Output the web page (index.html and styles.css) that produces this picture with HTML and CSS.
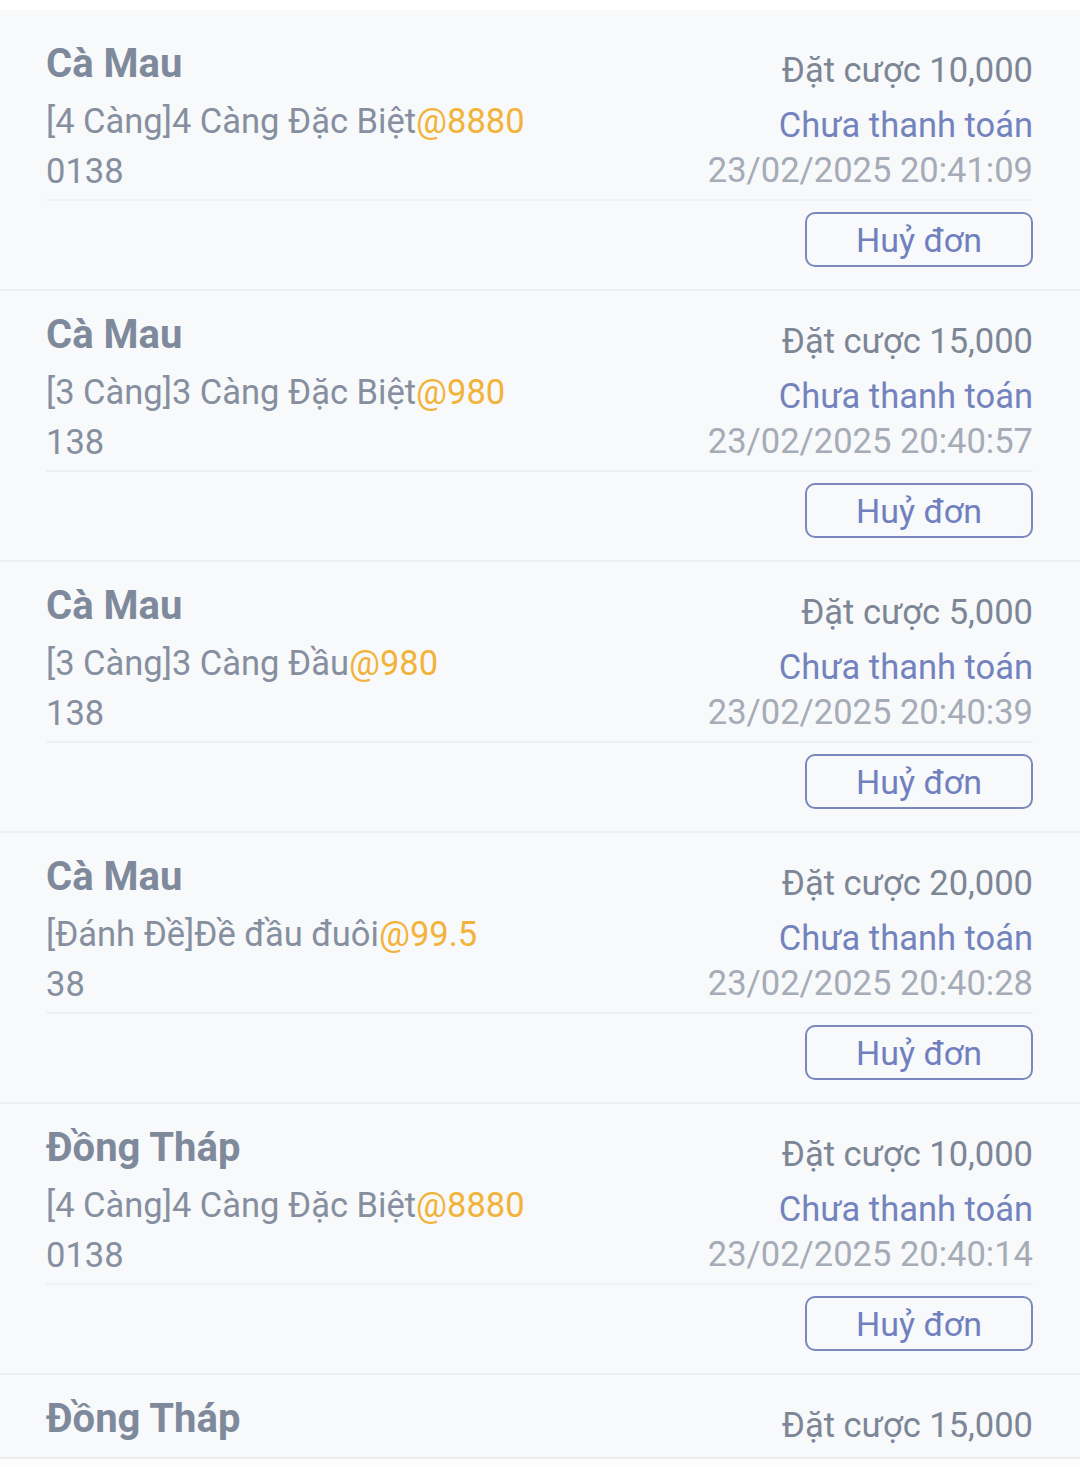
FILE: index.html
```html
<!DOCTYPE html>
<html lang="vi">
<head>
<meta charset="utf-8">
<title>Đơn cược</title>
<link rel="stylesheet" href="styles.css">
</head>
<body>
<div class="list">
  <div class="card">
    <div class="top">
      <div class="left">
        <div class="title">Cà Mau</div>
        <div class="detail">[4 Càng]4 Càng Đặc Biệt<span class="odds">@8880</span></div>
        <div class="number">0138</div>
      </div>
      <div class="right">
        <div class="bet">Đặt cược 10,000</div>
        <div class="status">Chưa thanh toán</div>
        <div class="date">23/02/2025 20:41:09</div>
      </div>
    </div>
    <div class="actions"><button class="cancel">Huỷ đơn</button></div>
  </div>
  <div class="card">
    <div class="top">
      <div class="left">
        <div class="title">Cà Mau</div>
        <div class="detail">[3 Càng]3 Càng Đặc Biệt<span class="odds">@980</span></div>
        <div class="number">138</div>
      </div>
      <div class="right">
        <div class="bet">Đặt cược 15,000</div>
        <div class="status">Chưa thanh toán</div>
        <div class="date">23/02/2025 20:40:57</div>
      </div>
    </div>
    <div class="actions"><button class="cancel">Huỷ đơn</button></div>
  </div>
  <div class="card">
    <div class="top">
      <div class="left">
        <div class="title">Cà Mau</div>
        <div class="detail">[3 Càng]3 Càng Đầu<span class="odds">@980</span></div>
        <div class="number">138</div>
      </div>
      <div class="right">
        <div class="bet">Đặt cược 5,000</div>
        <div class="status">Chưa thanh toán</div>
        <div class="date">23/02/2025 20:40:39</div>
      </div>
    </div>
    <div class="actions"><button class="cancel">Huỷ đơn</button></div>
  </div>
  <div class="card">
    <div class="top">
      <div class="left">
        <div class="title">Cà Mau</div>
        <div class="detail">[Đánh Đề]Đề đầu đuôi<span class="odds">@99.5</span></div>
        <div class="number">38</div>
      </div>
      <div class="right">
        <div class="bet">Đặt cược 20,000</div>
        <div class="status">Chưa thanh toán</div>
        <div class="date">23/02/2025 20:40:28</div>
      </div>
    </div>
    <div class="actions"><button class="cancel">Huỷ đơn</button></div>
  </div>
  <div class="card">
    <div class="top">
      <div class="left">
        <div class="title">Đồng Tháp</div>
        <div class="detail">[4 Càng]4 Càng Đặc Biệt<span class="odds">@8880</span></div>
        <div class="number">0138</div>
      </div>
      <div class="right">
        <div class="bet">Đặt cược 10,000</div>
        <div class="status">Chưa thanh toán</div>
        <div class="date">23/02/2025 20:40:14</div>
      </div>
    </div>
    <div class="actions"><button class="cancel">Huỷ đơn</button></div>
  </div>
  <div class="card partial">
    <div class="top">
      <div class="left">
        <div class="title">Đồng Tháp</div>
      </div>
      <div class="right">
        <div class="bet">Đặt cược 15,000</div>
      </div>
    </div>
  </div>
</div>
<div class="bottom-bar"></div>
</body>
</html>
```

FILE: styles.css
```css
html, body {
  margin: 0;
  padding: 0;
  background: #ffffff;
  overflow: hidden;
  height: 1467px;
}
body {
  font-family: Roboto, "Noto Sans", "Liberation Sans", sans-serif;
  padding-top: 10px;
  box-sizing: border-box;
}
.list {
  display: flex;
  flex-direction: column;
}
.card {
  background: #f8f9fa;
  border-bottom: 2px solid #eceef1;
  padding: 19px 47px 22px 46px;
}
.card:first-child {
  padding-top: 29px;
}
.card.partial {
  height: 82px;
  box-sizing: border-box;
  padding-bottom: 0;
  border-bottom: none;
}
.card.partial .top {
  border-bottom: none;
}
.top {
  display: flex;
  justify-content: space-between;
  align-items: flex-start;
  padding-bottom: 3px;
  border-bottom: 2px solid #eef0f3;
}
.left {
  display: flex;
  flex-direction: column;
}
.title {
  font-size: 40px;
  font-weight: 700;
  line-height: 50px;
  color: #7e8a9b;
}
.detail {
  font-size: 34.5px;
  line-height: 50px;
  margin-top: 7px;
  color: #858fa0;
  white-space: nowrap;
}
.odds {
  color: #f2b33a;
}
.number {
  font-size: 34.5px;
  line-height: 50px;
  color: #858fa0;
}
.right {
  display: flex;
  flex-direction: column;
  align-items: flex-end;
  margin-top: 9px;
  font-size: 34.5px;
  line-height: 44px;
  white-space: nowrap;
}
.bet {
  color: #7c8696;
}
.status {
  margin-top: 11px;
  color: #7383bd;
}
.date {
  margin-top: 1px;
  color: #a5acb7;
}
.actions {
  display: flex;
  justify-content: flex-end;
  padding-top: 11px;
}
.cancel {
  width: 228px;
  height: 55px;
  box-sizing: border-box;
  border: 2px solid #7b88bd;
  border-radius: 10px;
  background: transparent;
  font-family: inherit;
  font-size: 34px;
  color: #7080bf;
  padding: 0;
  line-height: 50px;
}
.bottom-bar {
  position: fixed;
  left: 0;
  right: 0;
  bottom: 0;
  height: 8px;
  background: #fdfdfd;
  border-top: 2px solid #eceef1;
}
```
